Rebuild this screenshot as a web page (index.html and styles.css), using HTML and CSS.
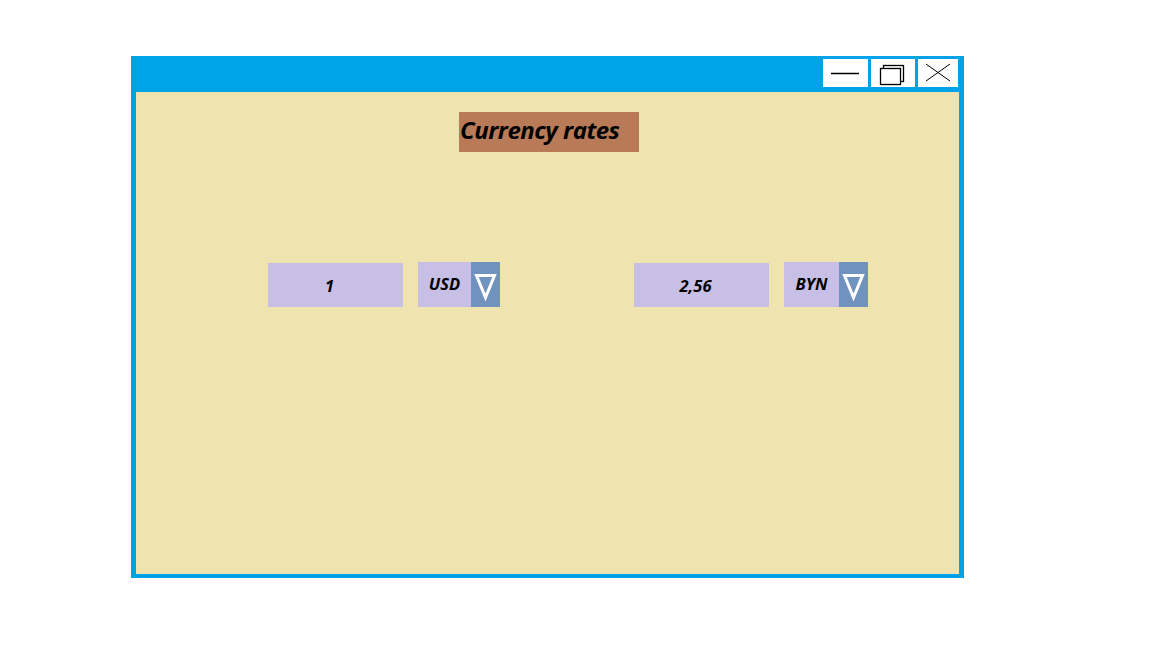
FILE: index.html
```html
<!DOCTYPE html>
<html>
<head>
<meta charset="utf-8">
<link rel="stylesheet" href="styles.css">
</head>
<body>
<div class="window">
  <div class="titlebar">
    <div class="tb-btn tb-min">
      <svg width="45" height="28" viewBox="0 0 45 28"><line x1="8" y1="14.5" x2="36" y2="14.5" stroke="#000" stroke-width="1.5"/></svg>
    </div>
    <div class="tb-btn tb-max">
      <svg width="44" height="28" viewBox="0 0 44 28">
        <rect x="12.5" y="6.5" width="20" height="16" fill="none" stroke="#000" stroke-width="1.3"/>
        <rect x="9.5" y="9.5" width="20" height="16" fill="#fff" stroke="#000" stroke-width="1.3"/>
      </svg>
    </div>
    <div class="tb-btn tb-close">
      <svg width="40" height="28" viewBox="0 0 40 28">
        <line x1="8" y1="5" x2="32" y2="22" stroke="#000" stroke-width="1"/>
        <line x1="32" y1="5" x2="8" y2="22" stroke="#000" stroke-width="1"/>
      </svg>
    </div>
  </div>
  <div class="content">
    <div class="heading">Currency rates</div>
    <div class="converter">
      <div class="field">1</div>
      <div class="select">
        <span class="select-value">USD</span>
        <span class="select-arrow"><svg width="29" height="45" viewBox="0 0 29 45"><polygon points="5.5,13.5 23.5,13.5 14.5,35.5" fill="none" stroke="#fff" stroke-width="3" stroke-linejoin="miter"/></svg></span>
      </div>
      <div class="field field-result">2,56</div>
      <div class="select select-wide">
        <span class="select-value">BYN</span>
        <span class="select-arrow"><svg width="29" height="45" viewBox="0 0 29 45"><polygon points="5.5,13.5 23.5,13.5 14.5,35.5" fill="none" stroke="#fff" stroke-width="3" stroke-linejoin="miter"/></svg></span>
      </div>
    </div>
  </div>
</div>
</body>
</html>
```
FILE: styles.css
```css
html, body {
  margin: 0;
  padding: 0;
  background: #ffffff;
}

body {
  font-family: "Open Sans", "Liberation Sans", sans-serif;
}

.window {
  box-sizing: border-box;
  width: 833px;
  height: 522px;
  margin: 56px 0 0 131px;
  background: #00a2e8;
  padding: 0 5px 4px 5px;
  display: flex;
  flex-direction: column;
}

.titlebar {
  height: 36px;
  box-sizing: border-box;
  padding: 3px 1px 0 0;
  display: flex;
  justify-content: flex-end;
  align-items: flex-start;
  gap: 3px;
}

.tb-btn {
  height: 28px;
  background: #ffffff;
  display: flex;
}

.tb-min { width: 45px; }
.tb-max { width: 44px; }
.tb-close { width: 40px; }

.content {
  flex: 1;
  background: #efe4b0;
  display: flex;
  flex-direction: column;
}

.heading {
  margin: 20px 0 0 323px;
  width: 180px;
  height: 40px;
  box-sizing: border-box;
  padding: 0 0 0 1px;
  background: #b97a57;
  color: #000;
  font-weight: 700;
  font-style: italic;
  font-size: 24px;
  letter-spacing: -0.5px;
  line-height: 36px;
  white-space: nowrap;
}

.converter {
  margin: 110px 0 0 132px;
  display: flex;
  align-items: flex-end;
}

.field {
  width: 135px;
  height: 44px;
  box-sizing: border-box;
  padding-right: 12px;
  background: #c8bfe7;
  display: flex;
  align-items: center;
  justify-content: center;
  font-weight: 700;
  font-style: italic;
  font-size: 16.5px;
  color: #000;
  margin-right: 15px;
}

.field-result {
  margin-left: 134px;
}

.select {
  width: 82px;
  height: 45px;
  background: #c8bfe7;
  display: flex;
}

.select-wide {
  width: 84px;
}

.select-value {
  flex: 1;
  display: flex;
  align-items: center;
  justify-content: center;
  font-weight: 700;
  font-style: italic;
  font-size: 16.5px;
  color: #000;
  padding-bottom: 3px;
}

.select-arrow {
  width: 29px;
  height: 45px;
  background: #7092be;
  display: flex;
}
```
